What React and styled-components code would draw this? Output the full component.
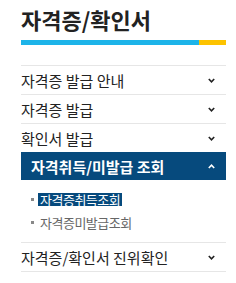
import styled, { createGlobalStyle } from "styled-components";

const Global = createGlobalStyle`
  body {
    margin: 0;
    background: #fff;
    font-family: "Noto Sans CJK KR", "Noto Sans", sans-serif;
  }
`;

const Side = styled.div`
  width: 205px;
  padding: 4px 0 0 21px;
`;

const Title = styled.h2`
  margin: 0;
  font-size: 22px;
  font-weight: 700;
  line-height: 30px;
  color: #222;
`;

const Bar = styled.div`
  display: flex;
  height: 5px;
  margin-top: 6px;

  .blue {
    flex: 1;
    background: #1db4e9;
  }
  .yellow {
    width: 27px;
    background: #fdc300;
  }
`;

const Menu = styled.ul`
  list-style: none;
  margin: 20px 0 0;
  padding: 0;
  border-bottom: 1px solid #e6e6e6;
`;

const Item = styled.li`
  border-top: ${(p) => (p.$active ? "none" : "1px solid #e6e6e6")};
`;

const Head = styled.div`
  display: flex;
  align-items: center;
  justify-content: space-between;
  height: 28px;
  padding: 0 11px 0 ${(p) => (p.$active ? "10px" : "0")};
  background: ${(p) => (p.$active ? "#064a7d" : "transparent")};
  color: ${(p) => (p.$active ? "#fff" : "#222")};
  font-size: 15px;
  font-weight: ${(p) => (p.$active ? 700 : 400)};
`;

const Sub = styled.ul`
  list-style: none;
  margin: 0;
  padding: 8px 0 8px 10px;
`;

const SubItem = styled.li`
  display: flex;
  align-items: center;
  height: 23px;
  font-size: 13px;
  letter-spacing: -0.5px;
  color: #666;

  &::before {
    content: "";
    width: 3px;
    height: 3px;
    background: #888;
    margin-right: 4px;
  }

  span {
    padding: 0 2px;
    line-height: 13px;
    background: ${(p) => (p.$on ? "#064a7d" : "transparent")};
    color: ${(p) => (p.$on ? "#fff" : "#666")};
  }
`;

const Chevron = ({ up, color }) => (
  <svg width="7" height="5" viewBox="0 0 7 5">
    <path
      d={up ? "M0.8 4 L3.5 1.2 L6.2 4" : "M0.8 1 L3.5 3.8 L6.2 1"}
      fill="none"
      stroke={color}
      strokeWidth="1.6"
    />
  </svg>
);

const items = [
  { label: "자격증 발급 안내" },
  { label: "자격증 발급" },
  { label: "확인서 발급" },
  {
    label: "자격취득/미발급 조회",
    active: true,
    subs: [
      { label: "자격증취득조회", on: true },
      { label: "자격증미발급조회" },
    ],
  },
  { label: "자격증/확인서 진위확인" },
];

export default function App() {
  return (
    <>
      <Global />
      <Side>
        <Title>자격증/확인서</Title>
        <Bar>
          <div className="blue" />
          <div className="yellow" />
        </Bar>
        <Menu>
          {items.map((it) => (
            <Item key={it.label} $active={it.active}>
              <Head $active={it.active}>
                {it.label}
                <Chevron up={it.active} color={it.active ? "#fff" : "#222"} />
              </Head>
              {it.subs && (
                <Sub>
                  {it.subs.map((s) => (
                    <SubItem key={s.label} $on={s.on}>
                      <span>{s.label}</span>
                    </SubItem>
                  ))}
                </Sub>
              )}
            </Item>
          ))}
        </Menu>
      </Side>
    </>
  );
}
